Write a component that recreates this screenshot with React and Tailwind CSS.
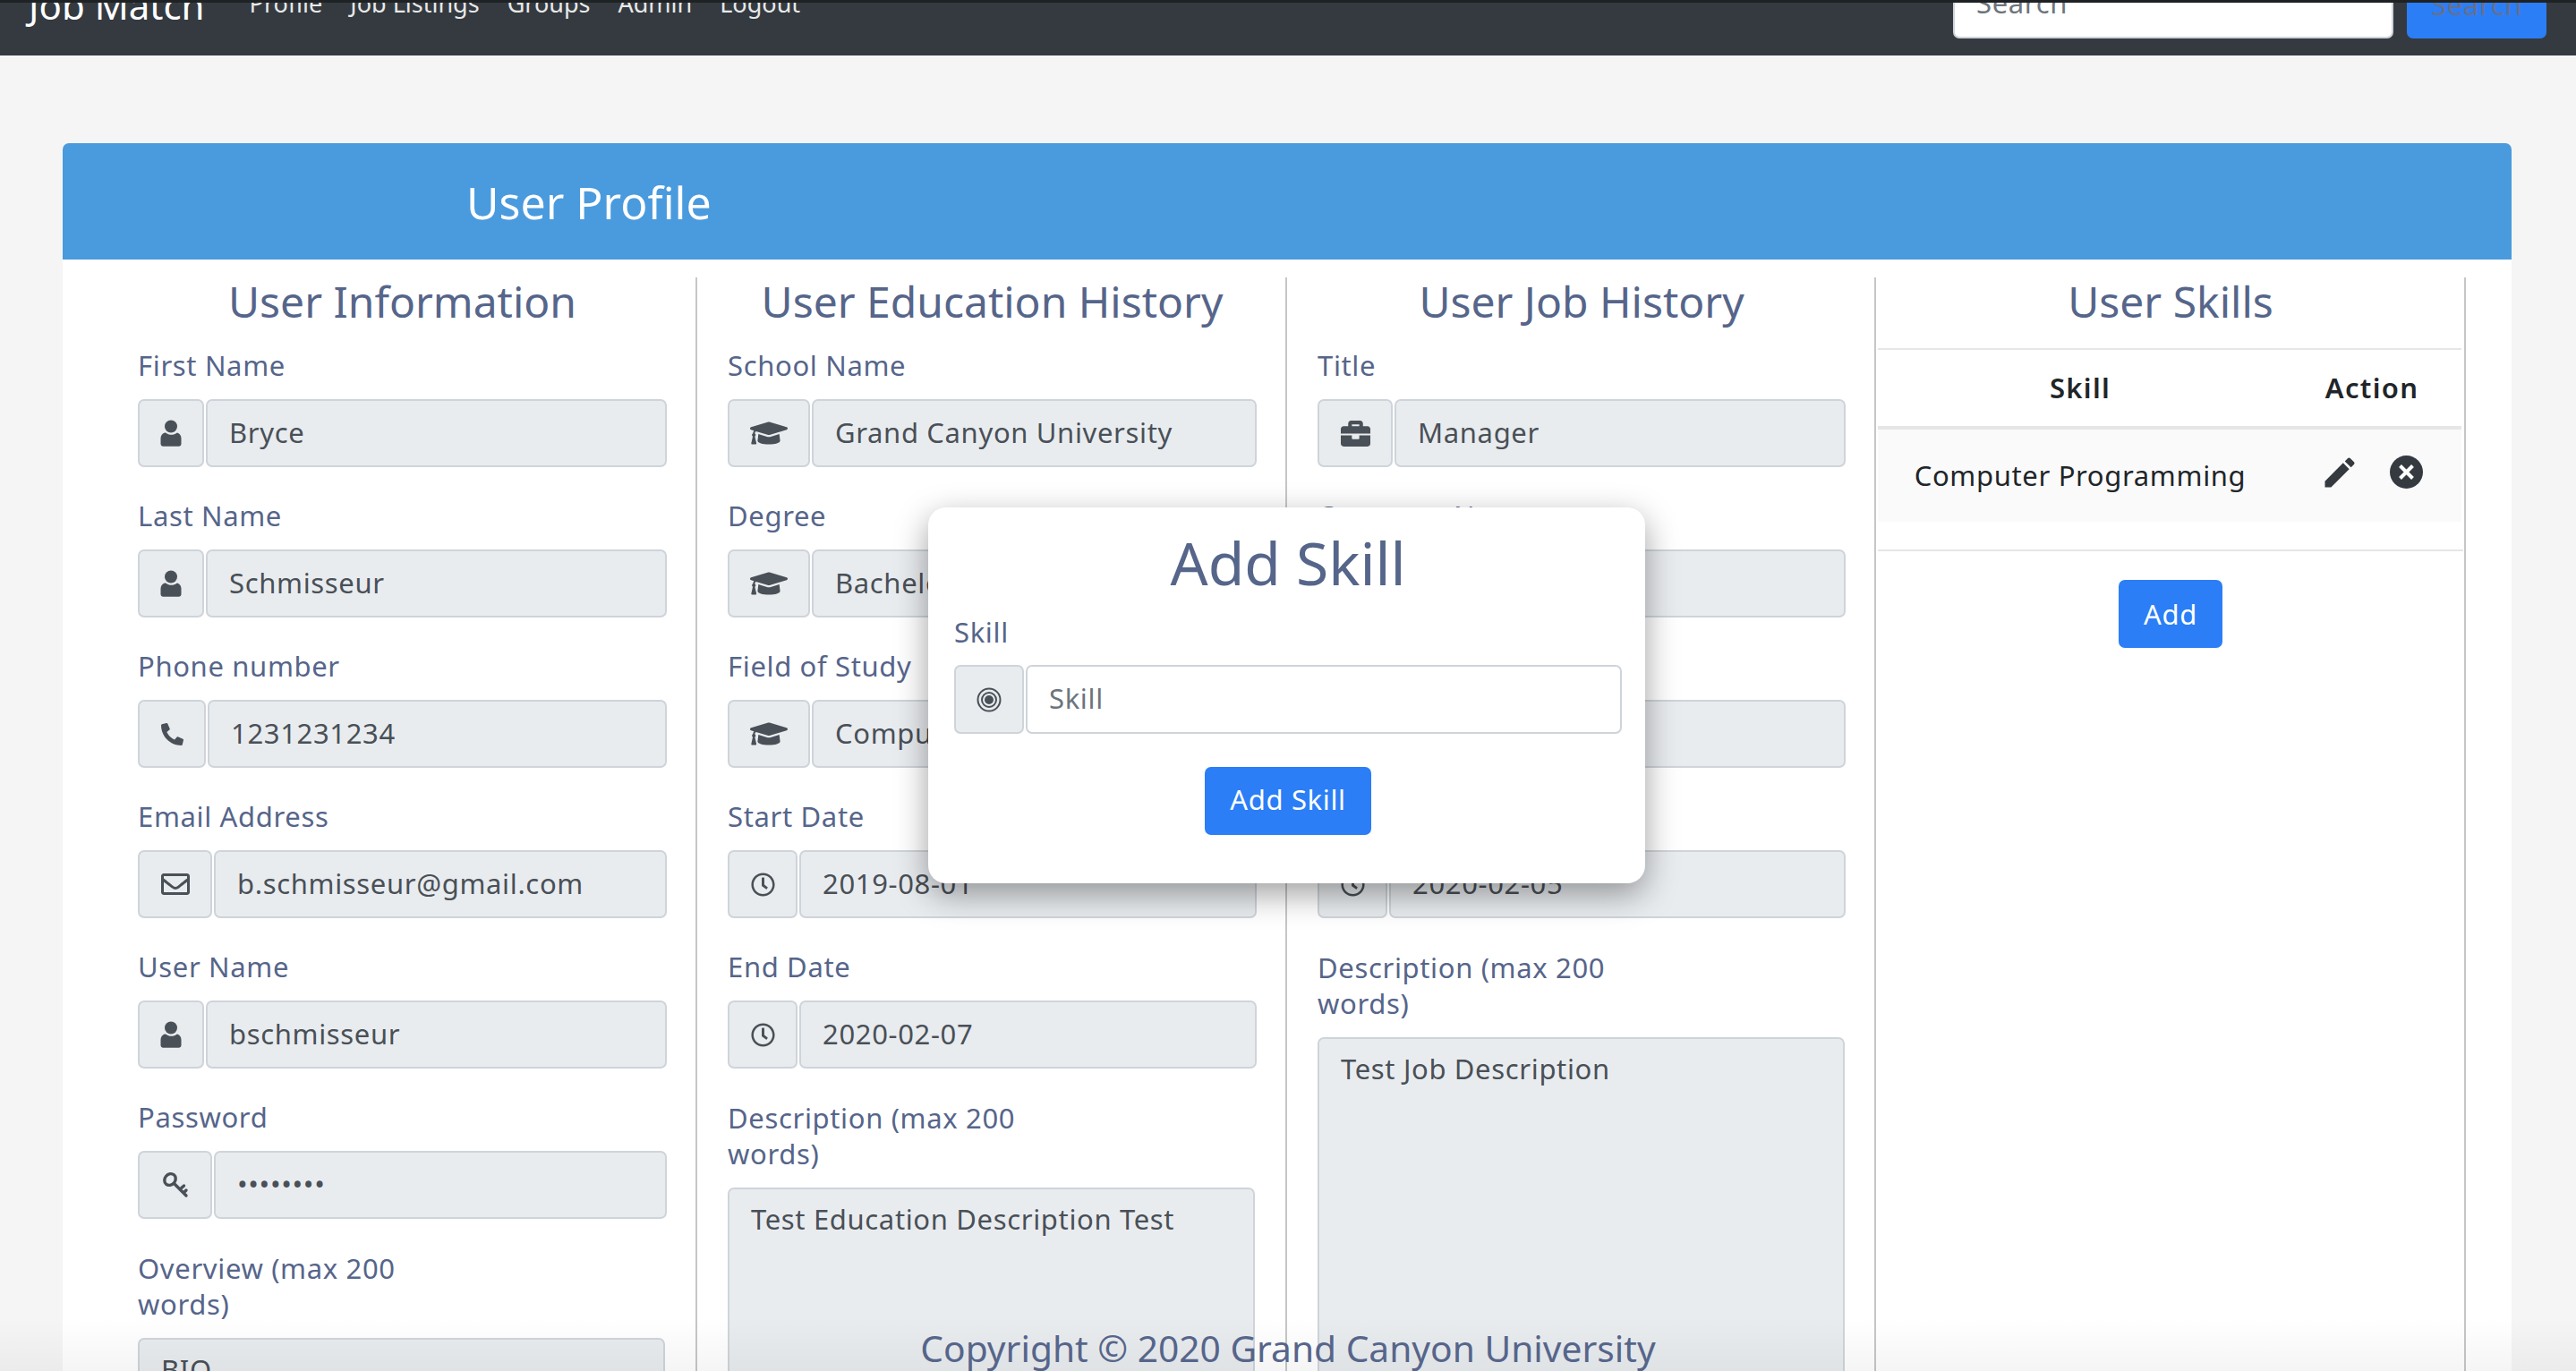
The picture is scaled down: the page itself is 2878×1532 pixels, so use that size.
import { FaGraduationCap, FaBriefcase, FaRegEnvelope, FaRegClock, FaPhoneAlt } from 'react-icons/fa';
import { MdEdit } from 'react-icons/md';

const PersonIcon = () => (
  <svg width="24" height="30" viewBox="0 0 24 30" fill="currentColor">
    <circle cx="12" cy="7.5" r="7" />
    <path d="M5 14.5C2 15.5 0.5 18 0.5 21v6c0 1.6 1.2 2.8 2.8 2.8h17.4c1.6 0 2.8-1.2 2.8-2.8v-6c0-3-1.5-5.500-4.500-6.500-2 1.500-4.300 2.300-6.500 2.300s-4.500-.8-6.500-2.300z" />
  </svg>
);

const KeyIcon = () => (
  <svg width="30" height="30" viewBox="0 0 30 30" fill="none" stroke="currentColor" strokeWidth="3.4" strokeLinecap="round">
    <ellipse cx="9" cy="9" rx="5.800" ry="6.800" transform="rotate(40 9 9)" />
    <path d="M13.500 13.500 27 27M20 20l4.500-4M24 24l3-3" />
  </svg>
);

const TargetIcon = () => (
  <svg width="28" height="28" viewBox="0 0 28 28" fill="none" stroke="currentColor" strokeWidth="2">
    <circle cx="14" cy="14" r="12.500" />
    <circle cx="14" cy="14" r="8" />
    <circle cx="14" cy="14" r="4" fill="currentColor" />
  </svg>
);

const CloseIcon = () => (
  <svg width="37" height="37" viewBox="0 0 37 37">
    <circle cx="18.500" cy="18.500" r="18.500" fill="#343a40" />
    <path d="M11.500 11.500l14 14M25.500 11.500l-14 14" stroke="#fff" strokeWidth="4" />
  </svg>
);

const person = { icon: <PersonIcon />, w: 'w-[74px]' };
const phone = { icon: <FaPhoneAlt size={25} />, w: 'w-[76px]' };
const mail = { icon: <FaRegEnvelope size={32} />, w: 'w-[83px]' };
const key = { icon: <KeyIcon />, w: 'w-[83px]' };
const cap = { icon: <FaGraduationCap size={42} />, w: 'w-[92px]' };
const clock = { icon: <FaRegClock size={27} />, w: 'w-[78px]' };
const bag = { icon: <FaBriefcase size={33} />, w: 'w-[84px]' };

const Field = ({ label, value, addon, type = 'text' }) => (
  <div className="mb-[35px]">
    <label className="block leading-[39px] mb-[18px] text-[#56658a]">{label}</label>
    <div className="flex gap-[2px] h-[76px]">
      <span className={`${addon.w} shrink-0 flex items-center justify-center bg-[#e9ecef] border-2 border-[#ced4da] rounded-[7px] text-[#495057]`}>
        {addon.icon}
      </span>
      <input
        type={type}
        readOnly
        value={value}
        className="flex-1 min-w-0 px-[24px] pb-[2px] bg-[#e9ecef] border-2 border-[#ced4da] rounded-[7px] text-[#495057] outline-none"
      />
    </div>
  </div>
);

const LongField = ({ label, value, height }) => (
  <div>
    <label className="block w-[370px] leading-[40px] mb-[18px] text-[#56658a]">{label}</label>
    <textarea
      readOnly
      value={value}
      className={`block w-[589px] ${height} px-[24px] py-[10px] bg-[#e9ecef] border-2 border-[#ced4da] rounded-[7px] text-[#495057] outline-none resize-none`}
    />
  </div>
);

const Heading = ({ children }) => (
  <h3 className="h-[56px] mb-[23px] text-center text-[48px] leading-[54px] tracking-normal text-[#56658a]">{children}</h3>
);

const App = () => {
  return (
    <div className="relative h-[1532px] overflow-hidden bg-[#f5f5f5] font-['Noto_Sans',sans-serif] text-[31px] tracking-[0.65px]">
      <nav className="-mt-[40px] h-[102px] pb-[19px] pl-[32px] pr-[33px] flex items-end bg-[#343a40]">
        <div className="h-[76px] flex items-center flex-1 tracking-normal">
          <a className="text-[42px] text-white mr-[50px]">Job Match</a>
          <div className="flex gap-[31px] pb-[2px] text-[#e8e8e8] text-[27px]">
            <a>Profile</a>
            <a>Job Listings</a>
            <a>Groups</a>
            <a>Admin</a>
            <a>Logout</a>
          </div>
        </div>
        <input
          placeholder="Search"
          className="w-[492px] h-[76px] px-[24px] pb-[4px] mr-[15px] bg-white border-2 border-[#ced4da] rounded-[7px] outline-none placeholder:text-[#6c757d]"
        />
        <button className="w-[156px] h-[76px] bg-[#2b7ef6] rounded-[7px] text-[#64708f]">Search</button>
      </nav>
      <div className="absolute top-0 inset-x-0 h-[3px] bg-[#1f2224]" />

      <main className="mt-[98px] ml-[70px] w-[2736px]">
        <div className="h-[130px] pl-[451px] pt-[3px] flex items-center bg-[#4a9ade] rounded-t-[7px] text-white text-[50px] tracking-normal">
          User Profile
        </div>
        <div className="h-[1300px] pt-[20px] pl-[50px] flex bg-white">
          <section className="w-[659px] pl-[34px] pr-[32px] border-r-2 border-[#c6c6c6]">
            <Heading>User Information</Heading>
            <Field label="First Name" value="Bryce" addon={person} />
            <Field label="Last Name" value="Schmisseur" addon={person} />
            <Field label="Phone number" value="1231231234" addon={phone} />
            <Field label="Email Address" value="b.schmisseur@gmail.com" addon={mail} />
            <Field label="User Name" value="bschmisseur" addon={person} />
            <Field label="Password" value="password" type="password" addon={key} />
            <LongField label="Overview (max 200 words)" value="BIO" height="h-[300px]" />
          </section>

          <section className="w-[659px] pl-[34px] pr-[32px] border-r-2 border-[#c6c6c6]">
            <Heading>User Education History</Heading>
            <Field label="School Name" value="Grand Canyon University" addon={cap} />
            <Field label="Degree" value="Bachelor of Science" addon={cap} />
            <Field label="Field of Study" value="Computer Programming" addon={cap} />
            <Field label="Start Date" value="2019-08-01" addon={clock} />
            <Field label="End Date" value="2020-02-07" addon={clock} />
            <LongField label="Description (max 200 words)" value="Test Education Description Test" height="h-[300px]" />
          </section>

          <section className="w-[658px] pl-[34px] pr-[32px] border-r-2 border-[#c6c6c6]">
            <Heading>User Job History</Heading>
            <Field label="Title" value="Manager" addon={bag} />
            <Field label="Company Name" value="Company" addon={bag} />
            <Field label="Location" value="Phoenix" addon={bag} />
            <Field label="Start Date" value="2020-02-05" addon={clock} />
            <LongField label="Description (max 200 words)" value="Test Job Description" height="h-[420px]" />
          </section>

          <section className="w-[659px] pl-[2px] pr-[1px] border-r-2 border-[#c6c6c6]">
            <Heading>User Skills</Heading>
            <table className="w-[652px] table-fixed border-t-2 border-[#e6e6e6] text-[#212529]">
              <thead>
                <tr className="h-[88px]">
                  <th className="w-[452px] font-semibold tracking-[1.3px]">Skill</th>
                  <th className="font-semibold tracking-[1.3px]">Action</th>
                </tr>
              </thead>
              <tbody className="border-t-4 border-[#e6e6e6]">
                <tr className="h-[105px] bg-[#fafafa]">
                  <td className="text-center">Computer Programming</td>
                  <td>
                    <div className="flex items-center gap-[34px] pl-[42px] -translate-y-[4px] text-[#343a40]">
                      <MdEdit size={44} />
                      <CloseIcon />
                    </div>
                  </td>
                </tr>
              </tbody>
            </table>
            <div className="mt-[31px] pt-[32px] border-t-2 border-[#e6e6e6] w-[654px] text-center">
              <button className="w-[116px] h-[76px] bg-[#2b7ef6] rounded-[7px] text-white">Add</button>
            </div>
          </section>
        </div>
      </main>

      <div className="absolute left-0 right-0 bottom-0 h-[60px] bg-linear-to-b from-transparent to-black/[.04]" />
      <footer className="absolute left-0 right-0 bottom-0 h-[49px] text-center text-[40.700px] leading-[46px] tracking-normal text-[#56658a]">
        Copyright © 2020 Grand Canyon University
      </footer>

      <div className="absolute left-[1037px] top-[567px] w-[801px] h-[420px] pt-[26px] pl-[29px] pr-[26px] bg-white rounded-[20px] shadow-[0_12px_36px_rgba(0,0,0,0.38)]">
        <h2 className="text-center text-[66px] leading-[70px] tracking-normal text-[#56658a]">Add Skill</h2>
        <label className="block mt-[23px] leading-[40px] mb-[17px] text-[#56658a]">Skill</label>
        <div className="flex gap-[2px] h-[77px]">
          <span className="w-[78px] shrink-0 flex items-center justify-center bg-[#e9ecef] border-2 border-[#ced4da] rounded-[7px] text-[#495057]">
            <TargetIcon />
          </span>
          <input
            placeholder="Skill"
            className="flex-1 min-w-0 px-[24px] pb-[2px] bg-white border-2 border-[#ced4da] rounded-[7px] outline-none placeholder:text-[#6c757d]"
          />
        </div>
        <div className="mt-[37px] text-center">
          <button className="w-[186px] h-[76px] pb-[4px] bg-[#2b7ef6] rounded-[7px] text-white">Add Skill</button>
        </div>
      </div>
    </div>
  );
};

export default App;
